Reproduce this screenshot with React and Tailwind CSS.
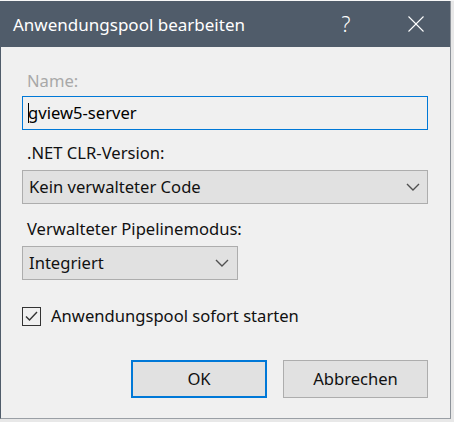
import React from "react";

function Chevron() {
  return (
    <svg width="14" height="8" viewBox="0 0 14 8" className="shrink-0">
      <polyline points="1,1 7,7 13,1" fill="none" stroke="#505050" strokeWidth="1.4" />
    </svg>
  );
}

export default function App() {
  return (
    <div
      className="w-[454px] h-[422px] bg-[#e8e8e8] overflow-hidden"
      style={{ fontFamily: '"Noto Sans", "Open Sans", sans-serif' }}
    >
      <div className="h-[1px] bg-[#f7f7f7]" />
      <div className="w-[451px] h-[418px] flex flex-col border-l border-l-[#505c6a] border-r border-r-[#8d939a] border-b border-b-[#9a9fa5]">
        {/* Title bar */}
        <div className="h-[46px] shrink-0 bg-[#505c6a] flex items-center pl-[12px] pr-[11px] text-white">
          <span className="text-[17px] leading-none">Anwendungspool bearbeiten</span>
          <span className="ml-auto w-[20px] text-center text-[21px] font-light leading-none">?</span>
          <span className="ml-[37px] w-[46px] h-[46px] flex items-center justify-center">
            <svg width="16" height="16" viewBox="0 0 16 16">
              <line x1="0.5" y1="0.5" x2="15.5" y2="15.5" stroke="#ffffff" strokeWidth="1.1" />
              <line x1="15.5" y1="0.5" x2="0.5" y2="15.5" stroke="#ffffff" strokeWidth="1.1" />
            </svg>
          </span>
        </div>

        {/* Body */}
        <div className="flex-1 bg-[#f0f0f0] pl-[21px] pr-[22px] pt-[24px] flex flex-col text-[16.6px] text-[#111111]">
          <div className="h-[20px] leading-[20px] pl-[5px] text-[#a8a8a8]">Name:</div>
          <div className="mt-[5px] h-[34px] border border-[#0078d7] bg-[#f0f0f0] flex items-center pl-[5px]">
            <span className="inline-block w-[1px] h-[20px] bg-black mr-[-1px]" />
            <span className="text-black">gview5-server</span>
          </div>

          <div className="mt-[13px] h-[20px] leading-[20px] pl-[5px]">.NET CLR-Version:</div>
          <div className="mt-[7px] h-[34px] border border-[#adadad] bg-[#e1e1e1] flex items-center pl-[6px] pr-[7px]">
            <span className="flex-1">Kein verwalteter Code</span>
            <Chevron />
          </div>

          <div className="mt-[15px] h-[20px] leading-[20px] pl-[5px]">Verwalteter Pipelinemodus:</div>
          <div className="mt-[7px] w-[216px] h-[34px] border border-[#adadad] bg-[#e1e1e1] flex items-center pl-[6px] pr-[8px]">
            <span className="flex-1">Integriert</span>
            <Chevron />
          </div>

          <div className="mt-[26px] h-[20px] flex items-center">
            <span className="w-[19px] h-[19px] border border-[#333333] bg-[#f0f0f0] flex items-center justify-center">
              <svg width="15" height="15" viewBox="0 0 15 15">
                <polyline points="2,7.5 5.5,11 13,3" fill="none" stroke="#333333" strokeWidth="1.4" />
              </svg>
            </span>
            <span className="ml-[10px] leading-[20px]">Anwendungspool sofort starten</span>
          </div>

          <div className="mt-[34px] flex justify-end gap-[16px]">
            <button className="w-[136px] h-[38px] border-2 border-[#0078d7] bg-[#e1e1e1] text-[16.6px] text-[#111111]">
              OK
            </button>
            <button className="w-[145px] h-[38px] border border-[#adadad] bg-[#e1e1e1] text-[16.6px] text-[#111111]">
              Abbrechen
            </button>
          </div>
        </div>
      </div>
    </div>
  );
}
